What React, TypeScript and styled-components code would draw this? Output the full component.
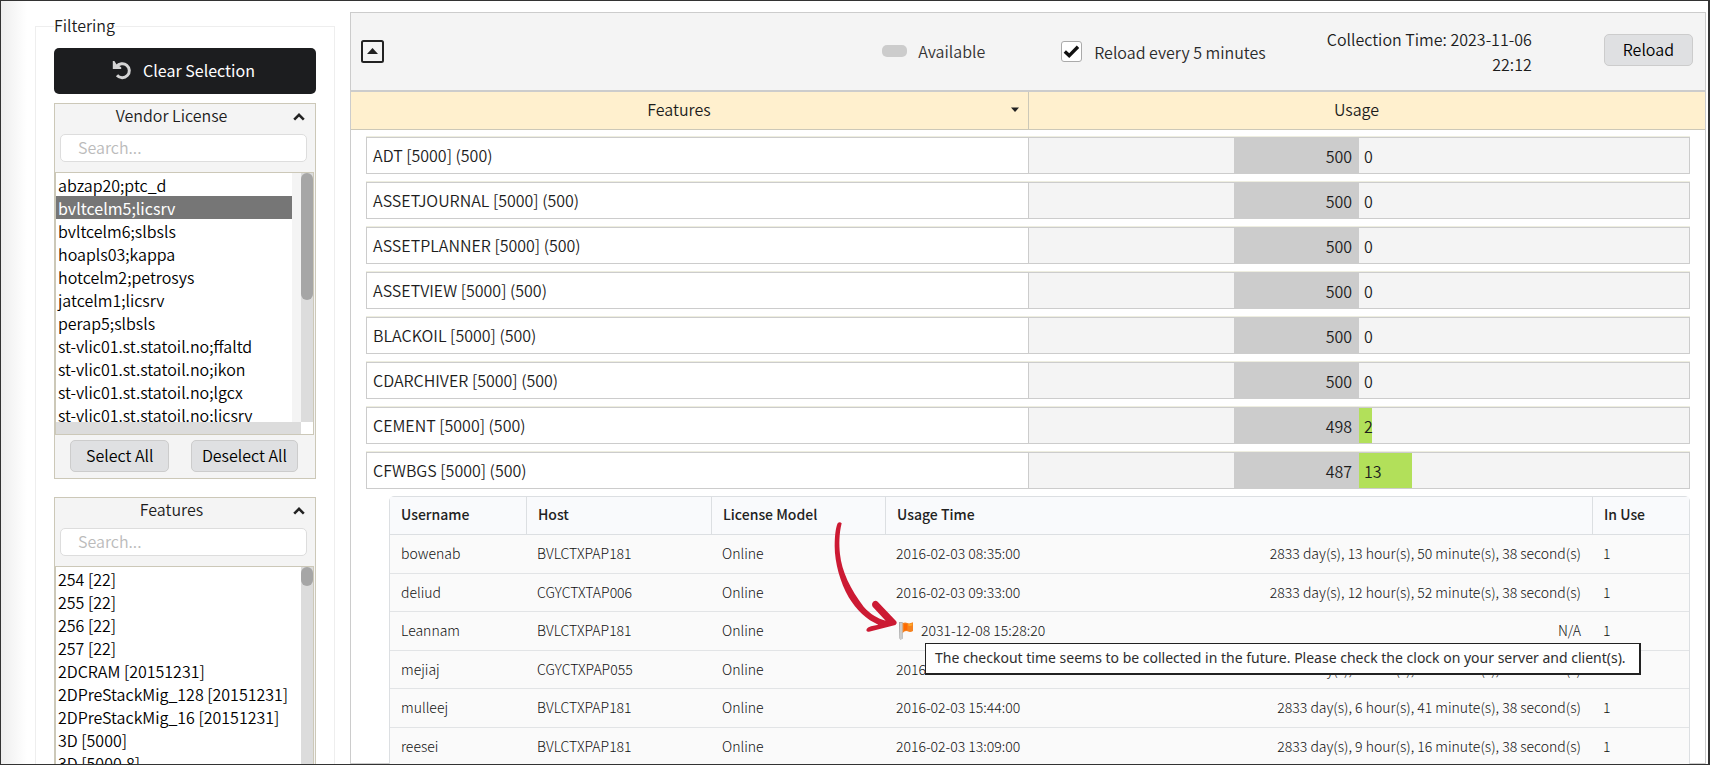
import React from "react";
import styled, { createGlobalStyle } from "styled-components";

const GlobalStyle = createGlobalStyle`
  *, *::before, *::after { box-sizing: border-box; }
  body {
    margin: 0;
    background: #fff;
    color: #1c1c1c;
    font-family: "Noto Sans CJK SC", "Noto Sans", sans-serif;
    font-size: 16px;
    font-weight: 350;
    line-height: 24px;
  }
  button, input, select { font: inherit; color: inherit; }
`;

const Frame = styled.div`
  display: flex;
  height: 100vh;
  overflow: hidden;
  border: 1px solid #333;
  border-right-width: 2px;
  background: linear-gradient(to right, #eee 0, #fff 26px);
`;

const Sidebar = styled.aside`
  flex: none;
  width: 349px;
  padding: 13px 15px 0 34px;
`;

const FilterGroup = styled.fieldset`
  min-width: 0;
  margin: 0;
  padding: 0 18px 40px;
  border: 1px solid #eee;
`;

const FilterLegend = styled.legend`
  padding: 0 0 2px;
  line-height: 22px;
`;

const ClearButton = styled.button`
  display: flex;
  align-items: center;
  justify-content: center;
  gap: 11px;
  width: 100%;
  height: 46px;
  margin-top: 10px;
  padding: 0 3px 2px 0;
  border: 0;
  border-radius: 5px;
  background: #1c1d1f;
  color: #fff;
  font-weight: 400;
`;

const Panel = styled.section`
  margin-top: 9px;
  border: 1px solid #ccc8b8;
  background: #f4f4f4;

  & + & { margin-top: 18px; }
`;

const PanelHeader = styled.div`
  display: flex;
  align-items: center;
  padding-right: 10px;
`;

const PanelTitle = styled.label`
  flex: 1;
  padding: 0 5px 3px 0;
  line-height: 22px;
  text-align: center;
`;

const IconButton = styled.button`
  display: flex;
  padding: 0;
  border: 0;
  background: none;
`;

const SearchInput = styled.input`
  display: block;
  width: calc(100% - 13px);
  height: 28px;
  margin: 5px 8px 10px 5px;
  padding: 0 17px 3px;
  border: 1px solid #ddd;
  border-radius: 5px;
  background: #fff;

  &::placeholder { color: #bbb; opacity: 1; }
`;

const ListFrame = styled.div`
  display: grid;
  grid-template-columns: 1fr 12px;
  margin-right: 1px;
  border: 1px solid #ccc8b8;
  background: #fff;
`;

const List = styled.select<{ $gutter?: boolean; $height: number }>`
  display: block;
  width: 100%;
  height: ${(p) => p.$height}px;
  padding: 0 ${(p) => (p.$gutter ? 9 : 0)}px 0 0;
  border: 0;
  border-radius: 0;
  outline: 0;
  background: linear-gradient(#f4f4f4, #f4f4f4) right / ${(p) => (p.$gutter ? 9 : 0)}px 100% no-repeat #fff;
  overflow: hidden;
  scrollbar-width: none;

  option {
    height: 23px;
    min-height: 23px;
    padding: 0 2px;
    color: #000;
    font-weight: 350;
    line-height: 23px;
  }
  option:checked {
    background: #767676 linear-gradient(#767676, #767676);
    color: #fff;
    font-weight: 400;
  }
`;

const ScrollTrack = styled.div`
  background: #dcdcdc;
`;

const ScrollThumb = styled.div<{ $size: number }>`
  height: ${(p) => p.$size}px;
  border-radius: 6px;
  background: #a6a6a6;
`;

const HorizontalTrack = styled.div`
  height: 12px;
  background: #dcdcdc;
`;

const ButtonRow = styled.div`
  display: flex;
  justify-content: space-between;
  padding: 5px 17px 6px 15px;
`;

const Button = styled.button`
  height: 32px;
  padding: 0 10px 2px;
  border: 1px solid #ccc;
  border-radius: 5px;
  background: #dfe0e2;
  color: #000;
  line-height: 28px;
`;

const SelectAllButton = styled(Button)`
  padding: 0 15px 2px;
`;

const ReloadButton = styled(Button)`
  margin-bottom: 3px;
  padding: 0 18px 2px;
`;

const Main = styled.main`
  flex: 1;
  min-width: 0;
  margin: 11px 2px 0 0;
  border: 1px solid #ccc;
  background: #fff;
`;

const Toolbar = styled.header`
  display: flex;
  align-items: center;
  height: 79px;
  padding: 0 12px 0 10px;
  border-bottom: 2px solid #ccc;
  background: #f4f4f4;
`;

const AvailableKey = styled.div`
  display: flex;
  align-items: center;
  gap: 11px;
  margin: 0 76px 0 auto;
  padding-bottom: 2px;
  color: #333;
`;

const Swatch = styled.span`
  width: 25px;
  height: 12px;
  border-radius: 5px;
  background: #ccc;
`;

const ReloadOption = styled.label`
  display: flex;
  align-items: center;
  gap: 12px;
  color: #2a2a2a;
`;

const Checkbox = styled.input`
  appearance: none;
  width: 21px;
  height: 21px;
  margin: 0;
  border: 1px solid #aaa;
  border-radius: 3px;
  background: #fff;
`;

const CheckboxBox = styled.span`
  display: grid;

  & > * { grid-area: 1 / 1; }
  & > svg { place-self: center; pointer-events: none; }
`;

const CollectionTime = styled.p`
  width: 210px;
  margin: 0 72px 0 56px;
  line-height: 25px;
  text-align: right;
`;

const ColumnHeaders = styled.div`
  display: grid;
  grid-template-columns: 1fr 1fr;
  height: 38px;
  border-bottom: 1px solid #ccc8b8;
  background: #fff0ce;
`;

const ColumnHeader = styled.div<{ $sortable?: boolean }>`
  display: flex;
  align-items: center;
  gap: 4px;
  padding: 0 ${(p) => (p.$sortable ? 9 : 21)}px 3px 0;

  & + & { border-left: 1px solid #ccc8b8; }
`;

const ColumnTitle = styled.span`
  flex: 1;
  text-align: center;
`;

const Rows = styled.div`
  padding: 7px 15px 0;
`;

const FeatureList = styled.div`
  display: grid;
  gap: 8px;
`;

const FeatureRow = styled.div`
  display: grid;
  grid-template-columns: 1fr 1fr;
  height: 37px;
  border: 1px solid #ccc;
  box-shadow: 0 -1px #eeeee0;
`;

const FeatureName = styled.div`
  padding: 0 6px;
  line-height: 34px;
`;

const UsageCell = styled.div`
  display: grid;
  grid-template-columns: 1fr 1fr;
  border-left: 1px solid #ccc;
  background: #f4f4f4;
  line-height: 34px;
`;

const FreeBar = styled.div`
  justify-self: end;
  padding: 1px 7px 0 0;
  background: #ccc;
  text-align: right;
`;

const UsedBar = styled.div<{ $empty: boolean }>`
  padding: 1px 0 0 5px;
  background: ${(p) => (p.$empty ? "none" : "#b2e05a")};
`;

const UserTableFrame = styled.div`
  margin: 7px 0 0 23px;
  border: 1px solid #dcdfe2;
  border-radius: 5px;
`;

const UserTable = styled.table`
  width: 100%;
  table-layout: fixed;
  border-collapse: separate;
  border-spacing: 0;
  background: #fafafa;
  font-size: 14px;
  line-height: 20px;

  th, td { padding: 0 11px 2px; text-align: left; }
  th {
    height: 38px;
    padding-bottom: 3px;
    border-bottom: 1px solid #dcdfe2;
    background: #f9fafc;
    font-weight: 500;
    color: #222;
  }
  th + th { border-left: 1px solid #dcdfe2; }
  td { height: 38px; border-bottom: 1px solid #e2e4e6; color: #111; font-weight: 300; }
  tbody tr:nth-child(odd) td { height: 39px; }
`;

const Col = styled.col<{ $width?: string }>`
  width: ${(p) => p.$width ?? "auto"};
`;

const UsageTime = styled.div`
  position: relative;
  display: flex;
  justify-content: space-between;
`;

const FlaggedTime = styled.span`
  display: flex;
  align-items: center;
  gap: 7px;
  padding-left: 2px;
`;

const Pointer = styled.svg`
  position: absolute;
  left: -64px;
  top: -100px;
  z-index: 2;
`;

const Tooltip = styled.div`
  position: absolute;
  left: 29px;
  top: 23px;
  z-index: 1;
  height: 32px;
  padding: 0 13px 0 9px;
  border: 1px solid #222;
  border-width: 1px 2px 2px 1px;
  background: #fff;
  color: #2e2e2e;
  font-family: "Noto Sans", "Open Sans", sans-serif;
  font-size: 14px;
  font-weight: 400;
  line-height: 28px;
  white-space: nowrap;
`;

const vendors = [
  "abzap20;ptc_d",
  "bvltcelm5;licsrv",
  "bvltcelm6;slbsls",
  "hoapls03;kappa",
  "hotcelm2;petrosys",
  "jatcelm1;licsrv",
  "perap5;slbsls",
  "st-vlic01.st.statoil.no;ffaltd",
  "st-vlic01.st.statoil.no;ikon",
  "st-vlic01.st.statoil.no;lgcx",
  "st-vlic01.st.statoil.no;licsrv",
];

const featureOptions = [
  "254 [22]",
  "255 [22]",
  "256 [22]",
  "257 [22]",
  "2DCRAM [20151231]",
  "2DPreStackMig_128 [20151231]",
  "2DPreStackMig_16 [20151231]",
  "3D [5000]",
  "3D [5000.8]",
];

const features = [
  { name: "ADT", free: 500, used: 0, freeShare: 38, usedShare: 0 },
  { name: "ASSETJOURNAL", free: 500, used: 0, freeShare: 38, usedShare: 0 },
  { name: "ASSETPLANNER", free: 500, used: 0, freeShare: 38, usedShare: 0 },
  { name: "ASSETVIEW", free: 500, used: 0, freeShare: 38, usedShare: 0 },
  { name: "BLACKOIL", free: 500, used: 0, freeShare: 38, usedShare: 0 },
  { name: "CDARCHIVER", free: 500, used: 0, freeShare: 38, usedShare: 0 },
  { name: "CEMENT", free: 498, used: 2, freeShare: 38, usedShare: 4 },
  { name: "CFWBGS", free: 487, used: 13, freeShare: 38, usedShare: 16 },
];

const users = [
  { name: "bowenab", host: "BVLCTXPAP181", time: "2016-02-03 08:35:00", span: "2833 day(s), 13 hour(s), 50 minute(s), 38 second(s)" },
  { name: "deliud", host: "CGYCTXTAP006", time: "2016-02-03 09:33:00", span: "2833 day(s), 12 hour(s), 52 minute(s), 38 second(s)" },
  { name: "Leannam", host: "BVLCTXPAP181", time: "2031-12-08 15:28:20", span: "N/A", future: true },
  { name: "mejiaj", host: "CGYCTXPAP055", time: "2016-02-03 15:44:00", span: "2833 day(s), 6 hour(s), 41 minute(s), 38 second(s)" },
  { name: "mulleej", host: "BVLCTXPAP181", time: "2016-02-03 15:44:00", span: "2833 day(s), 6 hour(s), 41 minute(s), 38 second(s)" },
  { name: "reesei", host: "BVLCTXPAP181", time: "2016-02-03 13:09:00", span: "2833 day(s), 9 hour(s), 16 minute(s), 38 second(s)" },
];

const UndoIcon = () => (
  <svg width="20" height="20" viewBox="0 0 20 20" fill="none" aria-hidden="true">
    <path d="M4.6 6.6A7 7 0 1 1 5 15.2" stroke="#d4d4d4" strokeWidth="3" />
    <path d="M.8 1h1.6l2 3.2 4.8 3V9H.8z" fill="#d4d4d4" />
  </svg>
);

const ChevronUp = () => (
  <svg width="12" height="8" viewBox="0 0 12 8" fill="none" aria-hidden="true">
    <path d="M1.2 6.6L6 1.9l4.8 4.7" stroke="#222" strokeWidth="2.6" />
  </svg>
);

const CollapseIcon = () => (
  <svg width="23" height="23" viewBox="0 0 23 23" aria-hidden="true">
    <rect x="1" y="1" width="21" height="21" rx="1.5" fill="none" stroke="#222" strokeWidth="2" />
    <path d="M6 14l5.5-6 5.5 6z" fill="#222" />
  </svg>
);

const CaretDown = () => (
  <svg width="8" height="5" viewBox="0 0 8 5" aria-hidden="true">
    <path d="M0 .5h8L4 5z" fill="#222" />
  </svg>
);

const CheckIcon = () => (
  <svg width="17" height="13" viewBox="0 0 17 13" fill="none" aria-hidden="true">
    <path d="M1.8 6.6l4.4 4L15 1.8" stroke="#111" strokeWidth="3.4" />
  </svg>
);

const FlagIcon = () => (
  <svg width="16" height="19" viewBox="296 358 48 57" role="img" aria-label="Flag">
    <path d="M299 361h11v50l-7 3-3-4z" fill="#a9a9a9" />
    <path d="M303 363h4v49h-4z" fill="#dedede" />
    <path d="M310 364q8-3 14 0t17-2v26q-8 5-16 1t-15 5z" fill="#f58220" />
    <path d="M314 367q6-2 10 0v18q-6-1-10 3z" fill="#ff6a00" />
    <path d="M327 367q6 1 12-2v6q-6 4-12 1z" fill="#ffa726" />
  </svg>
);

const PointerArrow = () => (
  <Pointer width="67" height="113" viewBox="95 62 201 339" aria-hidden="true">
    <path
      fill="#cc1a33"
      d="M124 72C116 105 116 135 119 165C124 215 150 270 190 322C210 345 232 357 256 364L217 322C211 312 222 299 232 307L287 365Q292 371 285 377L206 397Q196 398 199 389Q201 384 212 381L234 376C200 362 168 332 145 294C120 250 103 190 103 140C103 110 106 85 112 72Q118 66 124 72Z"
    />
  </Pointer>
);

type FilterPanelProps = {
  id: string;
  title: string;
  options: string[];
  selected?: string;
  height: number;
  thumb: number;
  wide?: boolean;
};

const FilterPanel = ({ id, title, options, selected, height, thumb, wide }: FilterPanelProps) => (
  <Panel>
    <PanelHeader>
      <PanelTitle htmlFor={id}>{title}</PanelTitle>
      <IconButton type="button" aria-label={`Collapse ${title}`}>
        <ChevronUp />
      </IconButton>
    </PanelHeader>
    <SearchInput type="text" placeholder="Search..." aria-label={`Search ${title}`} />
    <ListFrame>
      <List id={id} multiple $height={height} $gutter={wide} defaultValue={selected ? [selected] : []}>
        {options.map((o) => (
          <option key={o} value={o}>{o}</option>
        ))}
      </List>
      <ScrollTrack>
        <ScrollThumb $size={thumb} />
      </ScrollTrack>
      {wide && <HorizontalTrack />}
    </ListFrame>
    <ButtonRow>
      <SelectAllButton type="button">Select All</SelectAllButton>
      <Button type="button">Deselect All</Button>
    </ButtonRow>
  </Panel>
);

export default function App() {
  return (
    <>
      <GlobalStyle />
      <Frame>
        <Sidebar>
          <FilterGroup>
            <FilterLegend>Filtering</FilterLegend>
            <ClearButton type="button">
              <UndoIcon />
              Clear Selection
            </ClearButton>
            <FilterPanel id="vendor" title="Vendor License" options={vendors} selected="bvltcelm5;licsrv" height={249} thumb={127} wide />
            <FilterPanel id="feature" title="Features" options={featureOptions} height={249} thumb={19} />
          </FilterGroup>
        </Sidebar>
        <Main>
          <Toolbar>
            <IconButton type="button" aria-label="Collapse all">
              <CollapseIcon />
            </IconButton>
            <AvailableKey>
              <Swatch />
              Available
            </AvailableKey>
            <ReloadOption>
              <CheckboxBox>
                <Checkbox type="checkbox" defaultChecked />
                <CheckIcon />
              </CheckboxBox>
              Reload every 5 minutes
            </ReloadOption>
            <CollectionTime>Collection Time: 2023-11-06 22:12</CollectionTime>
            <ReloadButton type="button">Reload</ReloadButton>
          </Toolbar>
          <ColumnHeaders>
            <ColumnHeader $sortable>
              <ColumnTitle>Features</ColumnTitle>
              <CaretDown />
            </ColumnHeader>
            <ColumnHeader>
              <ColumnTitle>Usage</ColumnTitle>
            </ColumnHeader>
          </ColumnHeaders>
          <Rows>
            <FeatureList>
              {features.map((f) => (
                <FeatureRow key={f.name}>
                  <FeatureName>{`${f.name} [5000] (500)`}</FeatureName>
                  <UsageCell>
                    <FreeBar style={{ width: `${f.freeShare}%` }}>{f.free}</FreeBar>
                    <UsedBar $empty={f.used === 0} style={{ width: `${f.usedShare}%` }}>{f.used}</UsedBar>
                  </UsageCell>
                </FeatureRow>
              ))}
            </FeatureList>
            <UserTableFrame>
              <UserTable>
                <colgroup>
                  <Col $width="136px" />
                  <Col $width="185px" />
                  <Col $width="174px" />
                  <Col />
                  <Col $width="97px" />
                </colgroup>
                <thead>
                  <tr>
                    <th>Username</th>
                    <th>Host</th>
                    <th>License Model</th>
                    <th>Usage Time</th>
                    <th>In Use</th>
                  </tr>
                </thead>
                <tbody>
                  {users.map((u) => (
                    <tr key={u.name}>
                      <td>{u.name}</td>
                      <td>{u.host}</td>
                      <td>Online</td>
                      <td>
                        <UsageTime>
                          {u.future ? (
                            <FlaggedTime>
                              <FlagIcon />
                              {u.time}
                            </FlaggedTime>
                          ) : (
                            <span>{u.time}</span>
                          )}
                          <span>{u.span}</span>
                          {u.future && (
                            <>
                              <PointerArrow />
                              <Tooltip role="tooltip">
                                The checkout time seems to be collected in the future. Please check the clock on your server and client(s).
                              </Tooltip>
                            </>
                          )}
                        </UsageTime>
                      </td>
                      <td>1</td>
                    </tr>
                  ))}
                </tbody>
              </UserTable>
            </UserTableFrame>
          </Rows>
        </Main>
      </Frame>
    </>
  );
}
